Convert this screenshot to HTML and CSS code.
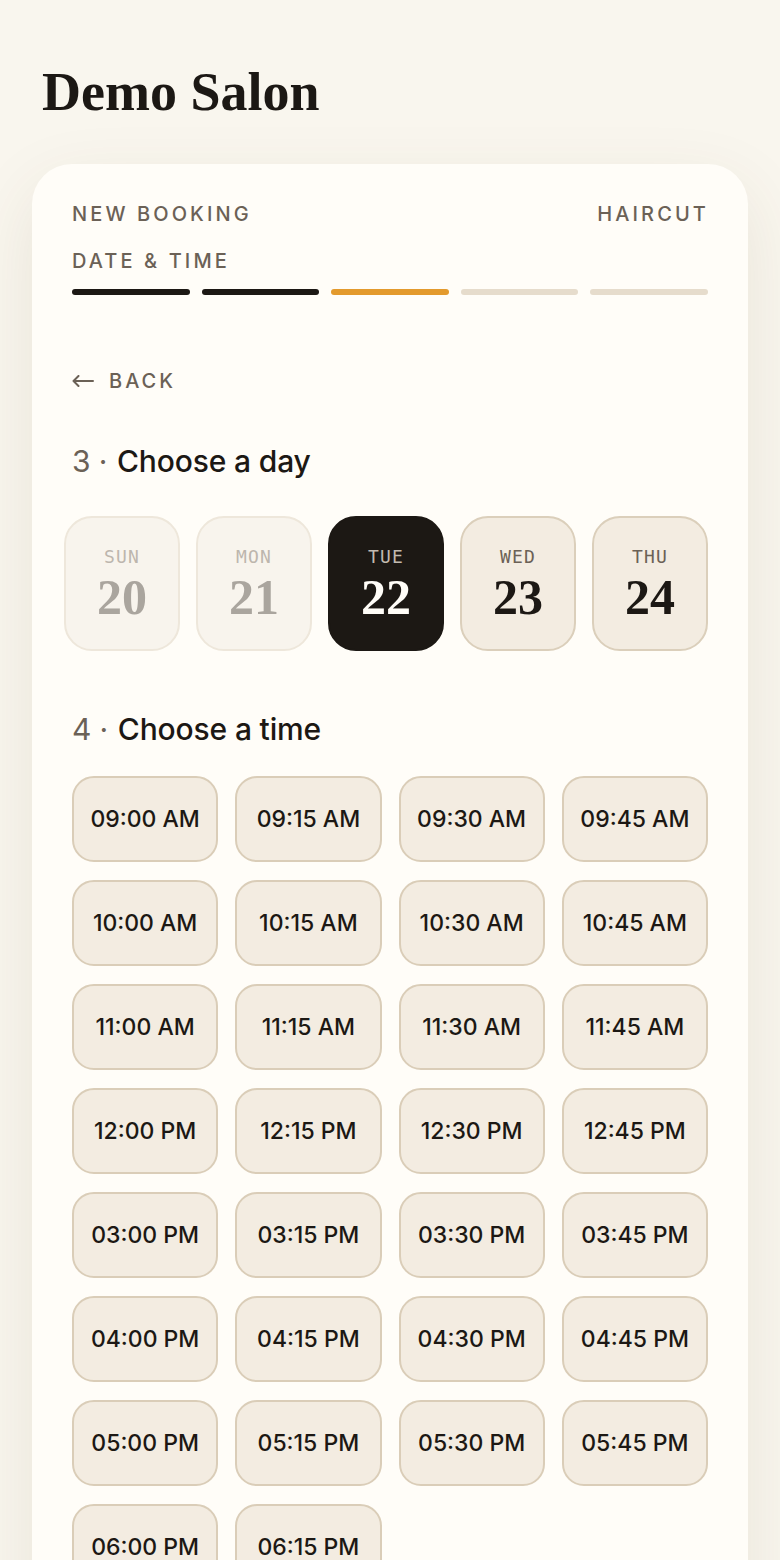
FILE: index.html
```html
<!DOCTYPE html>
<html lang="en">
<head>
<meta charset="utf-8">
<title>Demo Salon</title>
<link rel="stylesheet" href="styles.css">
</head>
<body>
<div class="page">
  <h1 class="title">Demo Salon</h1>
  <main class="card">
    <div class="meta-row">
      <span class="label">New booking</span>
      <span class="label">Haircut</span>
    </div>
    <div class="label step-name">Date &amp; Time</div>
    <div class="progress">
      <span class="seg done"></span>
      <span class="seg done"></span>
      <span class="seg current"></span>
      <span class="seg"></span>
      <span class="seg"></span>
    </div>

    <button class="back" type="button">
      <svg class="back-icon" width="22" height="12" viewBox="0 0 22 12" aria-hidden="true">
        <path d="M1.5 6 H21 M6.5 1 L1.5 6 L6.5 11" fill="none" stroke="currentColor" stroke-width="2" stroke-linecap="round" stroke-linejoin="round"/>
      </svg>
      <span>Back</span>
    </button>

    <h2 class="section-title"><span class="num">3 ·</span> Choose a day</h2>
    <div class="days">
      <div class="day disabled"><span class="dow">SUN</span><span class="date">20</span></div>
      <div class="day disabled"><span class="dow">MON</span><span class="date">21</span></div>
      <div class="day selected"><span class="dow">TUE</span><span class="date">22</span></div>
      <div class="day"><span class="dow">WED</span><span class="date">23</span></div>
      <div class="day"><span class="dow">THU</span><span class="date">24</span></div>
    </div>

    <h2 class="section-title time-title"><span class="num">4 ·</span> Choose a time</h2>
    <div class="slots">
      <button class="slot">09:00 AM</button>
      <button class="slot">09:15 AM</button>
      <button class="slot">09:30 AM</button>
      <button class="slot">09:45 AM</button>
      <button class="slot">10:00 AM</button>
      <button class="slot">10:15 AM</button>
      <button class="slot">10:30 AM</button>
      <button class="slot">10:45 AM</button>
      <button class="slot">11:00 AM</button>
      <button class="slot">11:15 AM</button>
      <button class="slot">11:30 AM</button>
      <button class="slot">11:45 AM</button>
      <button class="slot">12:00 PM</button>
      <button class="slot">12:15 PM</button>
      <button class="slot">12:30 PM</button>
      <button class="slot">12:45 PM</button>
      <button class="slot">03:00 PM</button>
      <button class="slot">03:15 PM</button>
      <button class="slot">03:30 PM</button>
      <button class="slot">03:45 PM</button>
      <button class="slot">04:00 PM</button>
      <button class="slot">04:15 PM</button>
      <button class="slot">04:30 PM</button>
      <button class="slot">04:45 PM</button>
      <button class="slot">05:00 PM</button>
      <button class="slot">05:15 PM</button>
      <button class="slot">05:30 PM</button>
      <button class="slot">05:45 PM</button>
      <button class="slot">06:00 PM</button>
      <button class="slot">06:15 PM</button>
    </div>
  </main>
</div>
</body>
</html>
```

FILE: styles.css
```css
* { box-sizing: border-box; }

html, body {
  margin: 0;
  padding: 0;
  background: #f9f6ee;
}

body {
  font-family: Inter, "Liberation Sans", sans-serif;
  color: #1c1814;
}

.page {
  padding: 0 32px 40px;
}

.title {
  margin: 0;
  padding: 62px 0 0 10px;
  font-family: "Liberation Serif", "Times New Roman", serif;
  font-weight: 700;
  font-size: 54px;
  line-height: 60px;
  letter-spacing: 0;
  color: #1c1814;
}

.card {
  margin-top: 42px;
  background: #fffdf8;
  border-radius: 40px;
  padding: 38px 40px 60px;
  box-shadow: 0 24px 70px rgba(90, 70, 40, 0.10);
}

.meta-row {
  display: flex;
  justify-content: space-between;
}

.label {
  font-size: 20px;
  line-height: 24px;
  font-weight: 500;
  letter-spacing: 0.155em;
  text-transform: uppercase;
  color: #6b6156;
}

.meta-row .label:last-child {
  margin-right: -1px;
}

.step-name {
  margin-top: 23px;
}

.progress {
  display: flex;
  gap: 12px;
  margin-top: 16px;
}

.seg {
  flex: 1;
  height: 6px;
  border-radius: 3px;
  background: #e6dccc;
}

.seg.done { background: #1c1814; }
.seg.current { background: #e39a2d; }

.back {
  display: flex;
  align-items: center;
  gap: 15px;
  margin-top: 74px;
  padding: 0;
  border: 0;
  background: none;
  font-family: Inter, "Liberation Sans", sans-serif;
  font-size: 20px;
  line-height: 24px;
  font-weight: 500;
  letter-spacing: 0.15em;
  text-transform: uppercase;
  color: #6b6156;
}

.back-icon { display: block; }

.section-title {
  margin: 50px 0 0;
  font-size: 30px;
  line-height: 36px;
  font-weight: 500;
  letter-spacing: -0.005em;
  color: #1c1814;
}

.section-title .num {
  color: #6b6156;
  font-weight: 400;
  margin-right: 2px;
}

.time-title {
  margin-top: 60px;
}

.days {
  display: flex;
  gap: 16px;
  margin: 37px 0 0 -8px;
}

.day {
  width: 116px;
  height: 135px;
  border-radius: 28px;
  background: #f3ece1;
  border: 2px solid #dbcfbb;
  display: flex;
  flex-direction: column;
  align-items: center;
  padding-top: 28px;
  gap: 4px;
}

.dow {
  font-family: "DejaVu Sans Mono", "Liberation Mono", monospace;
  font-size: 18px;
  line-height: 22px;
  letter-spacing: 0.06em;
  color: #6b6156;
}

.date {
  font-family: "Liberation Serif", "Times New Roman", serif;
  font-weight: 700;
  font-size: 50px;
  line-height: 50px;
  color: #1c1814;
}

.day.disabled {
  background: #f8f4ed;
  border-color: #eee7db;
}

.day.disabled .dow { color: #bdb6ad; }
.day.disabled .date { color: #aaa59e; }

.day.selected {
  background: #1c1814;
  border-color: #1c1814;
}

.day.selected .dow { color: #c2bab0; }
.day.selected .date { color: #fffdf8; }

.slots {
  display: grid;
  grid-template-columns: repeat(4, 1fr);
  gap: 18px 17px;
  margin-top: 29px;
}

.slot {
  height: 86px;
  border-radius: 22px;
  background: #f3ece1;
  border: 2px solid #dacdb8;
  font-family: Inter, "Liberation Sans", sans-serif;
  font-size: 23px;
  font-weight: 500;
  color: #1c1814;
  padding: 0;
}
```
